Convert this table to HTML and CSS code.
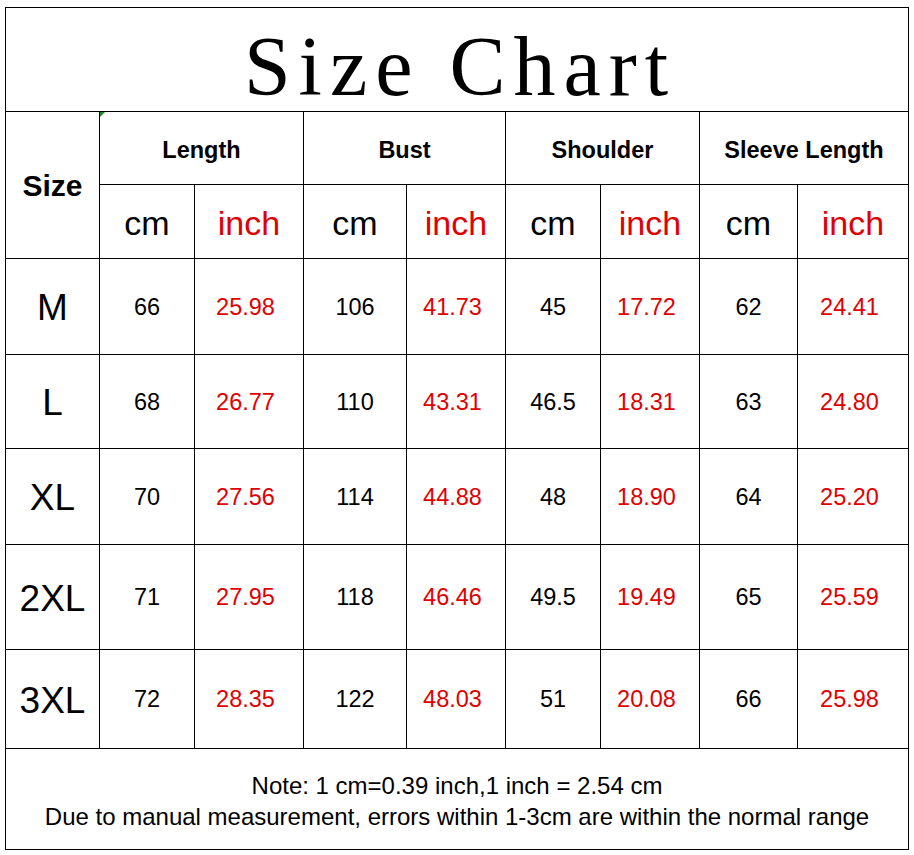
FILE: index.html
```html
<!DOCTYPE html>
<html lang="en">
<head>
<meta charset="utf-8">
<title>Size Chart</title>
<link rel="stylesheet" href="styles.css">
</head>
<body>
<div class="chart">
  <div class="cell title">Size Chart</div>

  <div class="cell size-head">Size</div>
  <div class="cell group marked">Length</div>
  <div class="cell group">Bust</div>
  <div class="cell group">Shoulder</div>
  <div class="cell group">Sleeve Length</div>

  <div class="cell unit">cm</div><div class="cell unit red">inch</div>
  <div class="cell unit">cm</div><div class="cell unit red">inch</div>
  <div class="cell unit">cm</div><div class="cell unit red">inch</div>
  <div class="cell unit">cm</div><div class="cell unit red">inch</div>

  <div class="cell size">M</div>
  <div class="cell val">66</div><div class="cell val red">25.98</div>
  <div class="cell val">106</div><div class="cell val red">41.73</div>
  <div class="cell val">45</div><div class="cell val red">17.72</div>
  <div class="cell val">62</div><div class="cell val red">24.41</div>

  <div class="cell size">L</div>
  <div class="cell val">68</div><div class="cell val red">26.77</div>
  <div class="cell val">110</div><div class="cell val red">43.31</div>
  <div class="cell val">46.5</div><div class="cell val red">18.31</div>
  <div class="cell val">63</div><div class="cell val red">24.80</div>

  <div class="cell size">XL</div>
  <div class="cell val">70</div><div class="cell val red">27.56</div>
  <div class="cell val">114</div><div class="cell val red">44.88</div>
  <div class="cell val">48</div><div class="cell val red">18.90</div>
  <div class="cell val">64</div><div class="cell val red">25.20</div>

  <div class="cell size">2XL</div>
  <div class="cell val">71</div><div class="cell val red">27.95</div>
  <div class="cell val">118</div><div class="cell val red">46.46</div>
  <div class="cell val">49.5</div><div class="cell val red">19.49</div>
  <div class="cell val">65</div><div class="cell val red">25.59</div>

  <div class="cell size">3XL</div>
  <div class="cell val">72</div><div class="cell val red">28.35</div>
  <div class="cell val">122</div><div class="cell val red">48.03</div>
  <div class="cell val">51</div><div class="cell val red">20.08</div>
  <div class="cell val">66</div><div class="cell val red">25.98</div>

  <div class="cell note">
    <p>Note: 1 cm=0.39 inch,1 inch = 2.54 cm</p>
    <p>Due to manual measurement, errors within 1-3cm are within the normal range</p>
  </div>
</div>
</body>
</html>
```

FILE: styles.css
```css
html, body {
  margin: 0;
  padding: 0;
  background: #ffffff;
}

body {
  padding: 7px 0 0 5px;
  font-family: "Liberation Sans", Arial, sans-serif;
  color: #000;
}

.chart {
  display: grid;
  grid-template-columns: 93px 94px 108px 102px 98px 94px 98px 97px 110px;
  grid-template-rows: 103px 72px 73px 95px 93px 95px 104px 98px 100px;
  gap: 1px;
  padding: 1px;
  background: #000;
  width: max-content;
}

.cell {
  background: #fff;
  display: flex;
  align-items: center;
  justify-content: center;
  text-align: center;
  position: relative;
}

.title {
  grid-column: 1 / -1;
  font-family: "Liberation Serif", "Times New Roman", serif;
  font-size: 84px;
  letter-spacing: 8px;
  padding-top: 14px;
  padding-left: 6px;
}

.size-head {
  grid-row: span 2;
  font-weight: bold;
  font-size: 30px;
  padding-top: 2px;
}

.group {
  grid-column: span 2;
  font-weight: bold;
  font-size: 23.5px;
  padding-top: 4px;
}

.marked::before {
  content: "";
  position: absolute;
  left: 0;
  top: 0;
  border-top: 5px solid #1f8a2e;
  border-right: 5px solid transparent;
}

.unit {
  font-size: 34px;
  padding-top: 3px;
}

.size {
  font-size: 37px;
  padding-top: 3px;
}

.val {
  font-size: 23.5px;
  padding-top: 1px;
}

.red {
  color: #e00000;
}

.val.red {
  padding-right: 7px;
}

.note {
  grid-column: 1 / -1;
  flex-direction: column;
  font-size: 24px;
  line-height: 31px;
  padding-top: 4px;
}

.note p {
  margin: 0;
}
```
